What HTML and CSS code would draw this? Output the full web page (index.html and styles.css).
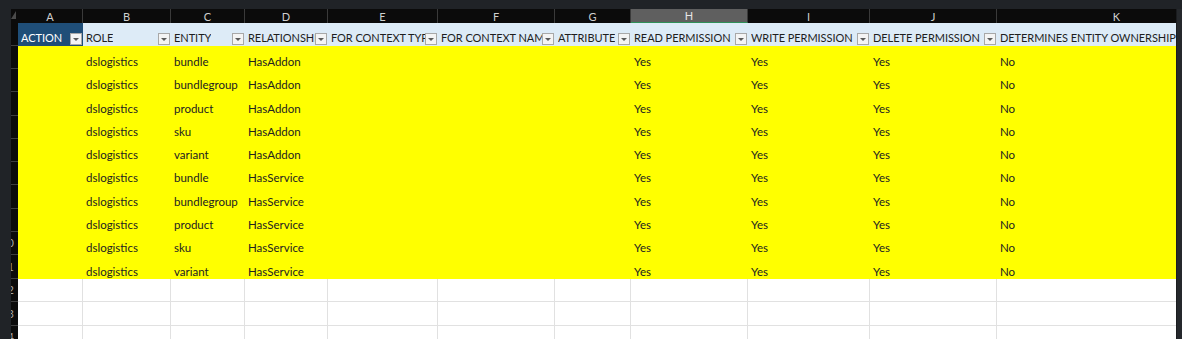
FILE: index.html
```html
<!DOCTYPE html>
<html lang="en">
<head>
    <meta charset="UTF-8">
    <title>Permissions</title>
    <link rel="stylesheet" href="styles.css">
    <script type="text/javascript">
        window.onload = function () {
            var sheet = document.getElementById("sheet");

            var letters = ["A", "B", "C", "D", "E", "F", "G", "H", "I", "J", "K"];
            var heads = ["ACTION", "ROLE", "ENTITY", "RELATIONSHIP", "FOR CONTEXT TYPE", "FOR CONTEXT NAME",
                "ATTRIBUTE", "READ PERMISSION", "WRITE PERMISSION", "DELETE PERMISSION", "DETERMINES ENTITY OWNERSHIP"];
            var entities = ["bundle", "bundlegroup", "product", "sku", "variant"];
            var relations = ["HasAddon", "HasService"];

            function add(cls, text) {
                var div = document.createElement("div");
                div.className = cls;
                if (text) {
                    div.textContent = text;
                }
                sheet.appendChild(div);
                return div;
            }

            //row number: only the right part of the header column is visible
            function rowNum(n) {
                var div = add("rh");
                var span = document.createElement("span");
                span.textContent = n;
                div.appendChild(span);
            }

            //column letters
            add("corner");
            for (var i = 0; i < letters.length; i++) {
                add(i == 7 ? "col sel" : "col", letters[i]);
            }

            //table header row
            rowNum(1);
            for (var i = 0; i < heads.length; i++) {
                var cell = add(i == 0 ? "head first" : "head");
                var label = document.createElement("span");
                label.className = "label";
                label.textContent = heads[i];
                var btn = document.createElement("span");
                btn.className = "filter";
                cell.appendChild(label);
                cell.appendChild(btn);
            }

            //data rows
            var n = 2;
            for (var r = 0; r < relations.length; r++) {
                for (var e = 0; e < entities.length; e++) {
                    var row = ["", "dslogistics", entities[e], relations[r], "", "", "", "Yes", "Yes", "Yes", "No"];
                    rowNum(n++);
                    for (var i = 0; i < row.length; i++) {
                        add("cell mark", row[i]);
                    }
                }
            }

            //empty rows
            for (var k = 0; k < 3; k++) {
                rowNum(n++);
                for (var i = 0; i < letters.length; i++) {
                    add("cell empty");
                }
            }
        }
    </script>
</head>
<body>
    <div class="topbar"></div>
    <div class="frame">
        <div class="viewport">
            <div id="sheet" class="sheet"></div>
        </div>
        <div class="edge"></div>
    </div>
</body>
</html>
```

FILE: styles.css
```css
*{
    margin: 0;
    padding: 0;
    box-sizing: border-box;
}
html, body{
    height: 100%;
    overflow: hidden;
}
body{
    background-color: #202327;
    font-family: Lato, "Liberation Sans", sans-serif;
    font-size: 11px;
    color: #222;
}
.topbar{
    height: 9px;
}
.frame{
    display: flex;
    padding-left: 11px;
}
.viewport{
    width: 1165px;
    height: 330px;
    overflow: hidden;
}
.edge{
    width: 6px;
    background-color: #25282c;
    border-left: 1px solid #1a1c1f;
}
.sheet{
    display: grid;
    grid-template-columns: 7px 65px 88px 74px 83px 110px 117px 76px 117px 122px 127px 240px;
    grid-template-rows: 14px 23px 23px 23px 24px 23px 23px 23px 24px 23px 23px 24px 23px 24px 23px;
    width: max-content;
}
/*column letters*/
.corner{
    background-color: #0b0b0b;
    padding: 2px 0 0 0;
}
.corner::after{
    content: "";
    display: block;
    width: 0;
    height: 0;
    border-left: 5px solid transparent;
    border-bottom: 8px solid #4b4b4b;
}
.col{
    background-color: #0b0b0b;
    color: #cfcfcf;
    border-right: 1px solid #3a3a3a;
    display: flex;
    align-items: center;
    justify-content: center;
    font-size: 11px;
}
.col.sel{
    background-color: #5f5f5f;
    color: #e6e6e6;
    border-bottom: 1px solid #2f8f58;
}
/*row numbers*/
.rh{
    background-color: #0b0b0b;
    border-bottom: 1px solid #3e3e3e;
    overflow: hidden;
    display: flex;
    align-items: flex-end;
    padding-bottom: 4px;
    color: #a8a8a8;
}
.rh span{
    flex: none;
    width: 23px;
    margin-left: -15px;
    text-align: center;
    line-height: 14px;
}
/*table header*/
.head{
    background-color: #ddebf7;
    display: flex;
    align-items: flex-end;
    padding: 0 0 1px 3px;
    white-space: nowrap;
    overflow: hidden;
    line-height: 14px;
    color: #1e1e1e;
    letter-spacing: -0.05px;
}
.head.first{
    background-color: #1f4e78;
    color: #fff;
}
.label{
    flex: 0 1 auto;
    min-width: 0;
    overflow: hidden;
}
.filter{
    flex: none;
    width: 12px;
    height: 12px;
    margin: 0 1px 0 auto;
    border: 1px solid #a8a8a8;
    background-color: #f4f4f4;
    display: flex;
    align-items: center;
    justify-content: center;
}
.filter::after{
    content: "";
    width: 0;
    height: 0;
    border-left: 3px solid transparent;
    border-right: 3px solid transparent;
    border-top: 3px solid #5a5a5a;
}
/*cells*/
.cell{
    display: flex;
    align-items: flex-end;
    padding: 0 0 0 3px;
    white-space: nowrap;
    overflow: hidden;
    line-height: 14px;
    font-size: 11.5px;
}
.mark{
    background-color: #ffff00;
}
.empty{
    background-color: #fff;
    border-right: 1px solid #e1e1e1;
    border-bottom: 1px solid #e1e1e1;
}
```
